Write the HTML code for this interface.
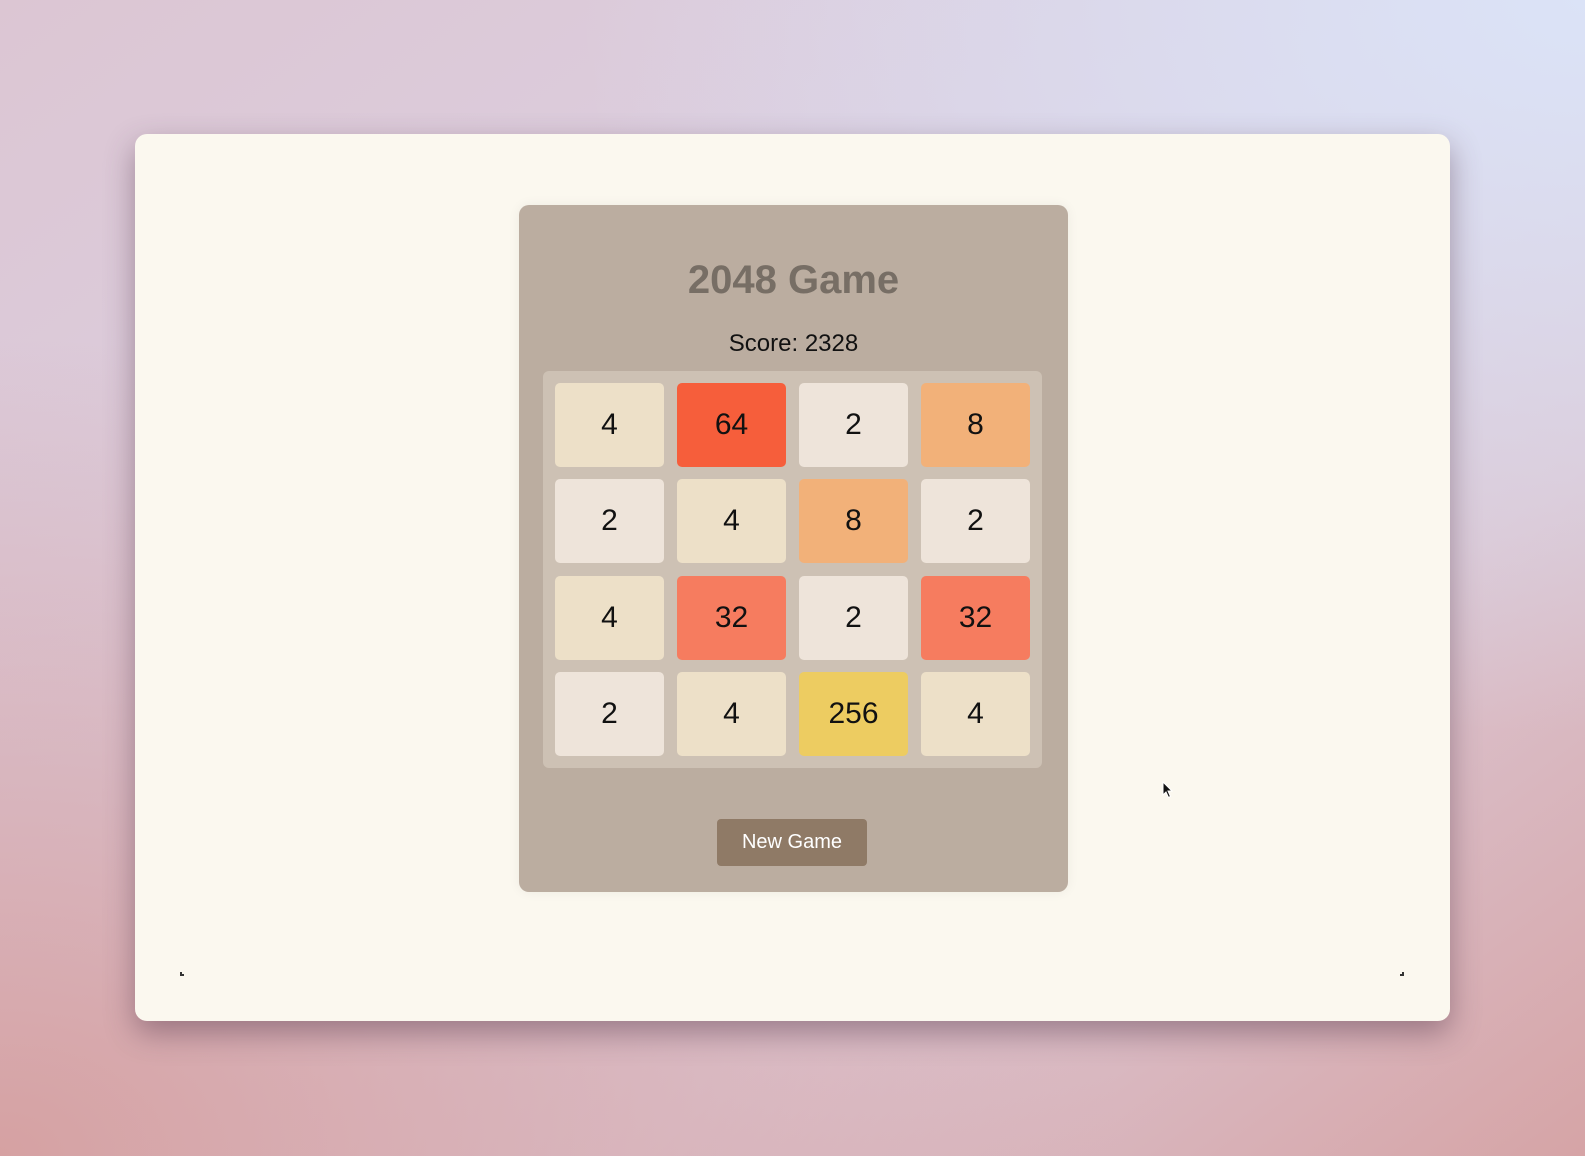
<!DOCTYPE html>
<html><head><meta charset="utf-8"><style>
*{margin:0;padding:0;box-sizing:border-box}
body{width:1585px;height:1156px;overflow:hidden;position:relative;font-family:"Liberation Sans",Arial,sans-serif;
background:linear-gradient(to bottom right,#dcc6d3 0%,#dbd0e2 45%,#dbc4d0 70%,#d6a4a6 100%);}
.bg2{position:absolute;inset:0;background:radial-gradient(ellipse at 100% 0%,#dbe3f7 0%,rgba(219,227,247,0) 45%),radial-gradient(ellipse at 0% 100%,#d6a1a2 0%,rgba(214,161,162,0) 50%);}
.win{position:absolute;left:135px;top:134px;width:1315px;height:887px;background:#fbf8ef;border-radius:12px;box-shadow:0 12px 30px rgba(80,50,70,.45)}
.panel{position:absolute;left:519px;top:205px;width:549px;height:687px;background:#bbada0;border-radius:10px;box-shadow:0 0 12px rgba(0,0,0,.06)}
h1{position:absolute;left:519px;width:549px;top:258px;text-align:center;font-size:40px;font-weight:bold;color:#776e65}
.score{position:absolute;left:519px;width:549px;top:330px;text-align:center;font-size:24px;color:#111}
.board{position:absolute;left:543px;top:371px;width:499px;height:397px;background:#cdc1b4;border-radius:6px}
.t{position:absolute;width:109px;height:84px;border-radius:5px;display:flex;align-items:center;justify-content:center;font-size:30px;color:#111}
.c2{background:#eee4da}.c4{background:#ede0c8}.c8{background:#f2b179}.c32{background:#f67c5f}.c64{background:#f65e3b}.c256{background:#edcc61}
.btn{position:absolute;left:717px;top:819px;width:150px;height:47px;background:#8f7a66;color:#fff;border-radius:4px;font-size:20px;display:flex;align-items:center;justify-content:center}
.mk{position:absolute;width:4px;height:4px;border-left:2px solid #333;border-bottom:2px solid #333}
</style></head><body><div class="bg2"></div>
<div class="win"></div>
<div class="panel"></div>
<h1>2048 Game</h1>
<div class="score">Score: 2328</div>
<div class="board"></div>
<div class="t c4" style="left:555px;top:383px">4</div>
<div class="t c64" style="left:677px;top:383px">64</div>
<div class="t c2" style="left:799px;top:383px">2</div>
<div class="t c8" style="left:921px;top:383px">8</div>
<div class="t c2" style="left:555px;top:479px">2</div>
<div class="t c4" style="left:677px;top:479px">4</div>
<div class="t c8" style="left:799px;top:479px">8</div>
<div class="t c2" style="left:921px;top:479px">2</div>
<div class="t c4" style="left:555px;top:576px">4</div>
<div class="t c32" style="left:677px;top:576px">32</div>
<div class="t c2" style="left:799px;top:576px">2</div>
<div class="t c32" style="left:921px;top:576px">32</div>
<div class="t c2" style="left:555px;top:672px">2</div>
<div class="t c4" style="left:677px;top:672px">4</div>
<div class="t c256" style="left:799px;top:672px">256</div>
<div class="t c4" style="left:921px;top:672px">4</div>
<div class="btn">New Game</div>
<div class="mk" style="left:180px;top:972px"></div>
<div class="mk" style="left:1400px;top:972px;border-left:none;border-right:2px solid #333"></div>
<svg style="position:absolute;left:1162px;top:781px" width="12" height="18" viewBox="0 0 12 18"><path d="M1 1 L1 14 L4 11 L6.5 16.5 L8.5 15.5 L6 10 L10 10 Z" fill="#111" stroke="#fff" stroke-width="1"/></svg>
</body></html>
